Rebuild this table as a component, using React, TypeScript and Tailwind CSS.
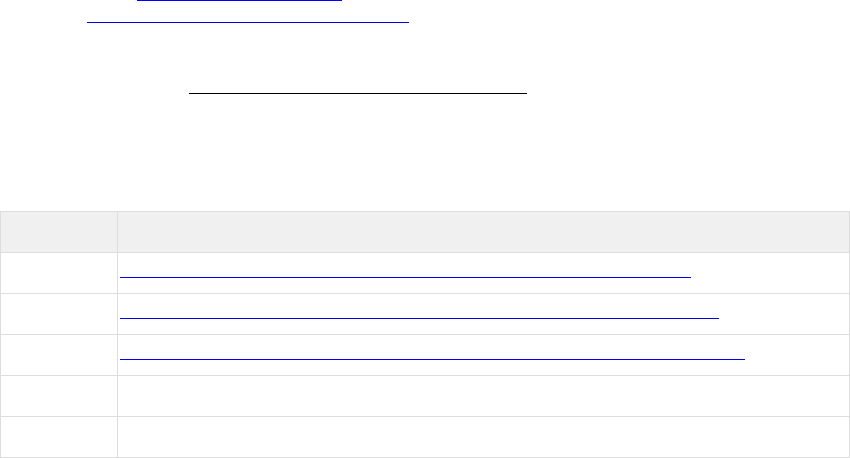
import React from "react";

const Line = ({ w, ml, mt, color }: { w: number; ml: number; mt: number; color: string }) => (
  <a
    href="#"
    className="block h-px text-transparent leading-none text-[0px]"
    style={{ width: w, marginLeft: ml, marginTop: mt, backgroundColor: color }}
  >
    {"\u00a0"}
  </a>
);

export default function App() {
  const rows = [
    { w: 571, color: "#0000ee" },
    { w: 599, color: "#0000ee" },
    { w: 625, color: "#0000ee" },
    null,
    null,
  ];
  return (
    <div
      className="w-[850px] h-[458px] bg-white overflow-hidden"
      style={{ fontFamily: '"Liberation Sans", Arial, sans-serif' }}
    >
      <div className="h-[211px] flex flex-col">
        <Line w={205} ml={137} mt={0} color="#0000ee" />
        <Line w={322} ml={87} mt={21} color="#0000ee" />
        <Line w={338} ml={189} mt={70} color="#000000" />
      </div>
      <div className="border-t border-l border-[#dddddd]">
        <div className="grid grid-cols-[117px_732px]">
          <div className="h-[41px] bg-[#f0f0f0] border-r border-b border-[#dddddd]" />
          <div className="h-[41px] bg-[#f0f0f0] border-r border-b border-[#dddddd]" />
          {rows.map((r, i) => (
            <React.Fragment key={i}>
              <div className="h-[41px] border-r border-b border-[#dddddd]" />
              <div className="h-[41px] border-r border-b border-[#dddddd] flex flex-col">
                {r && <Line w={r.w} ml={2} mt={24} color={r.color} />}
              </div>
            </React.Fragment>
          ))}
        </div>
      </div>
    </div>
  );
}
